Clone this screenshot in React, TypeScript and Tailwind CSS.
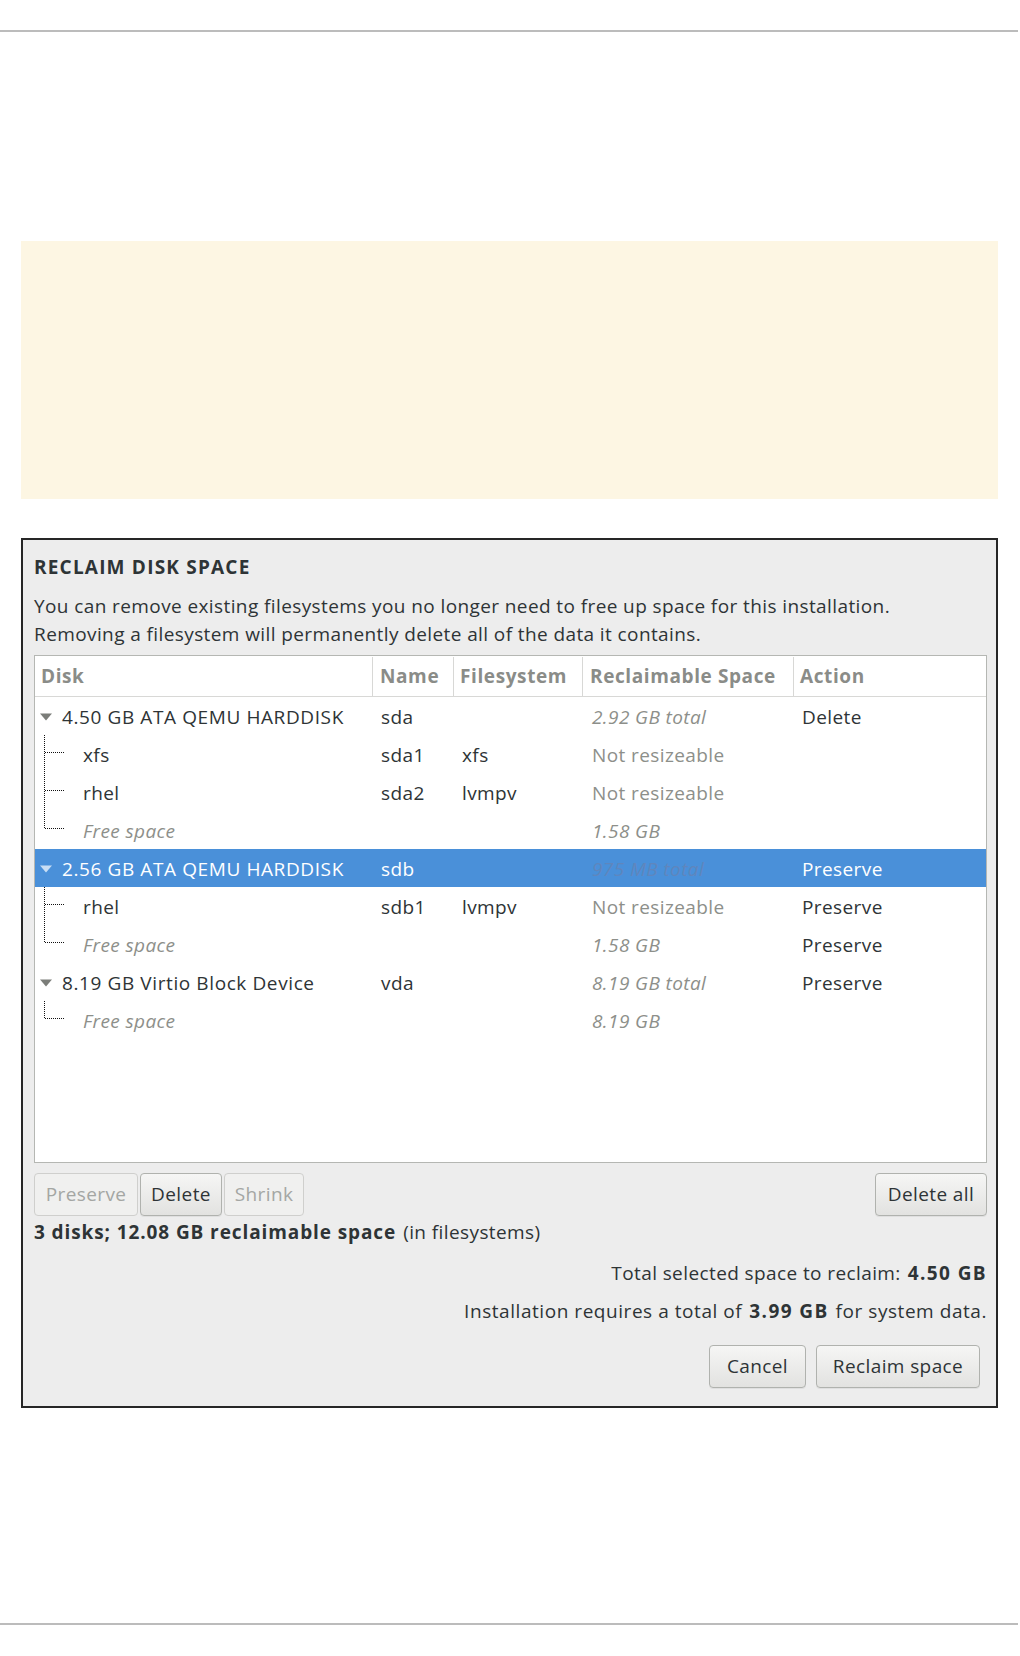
import React from "react";

type Row = {
  kind: "disk" | "child";
  last?: boolean;
  free?: boolean;
  selected?: boolean;
  name: string;
  dev?: string;
  fs?: string;
  rec: string;
  recItalic?: boolean;
  action?: string;
};

const rows: Row[] = [
  { kind: "disk", name: "4.50 GB ATA QEMU HARDDISK", dev: "sda", rec: "2.92 GB total", recItalic: true, action: "Delete" },
  { kind: "child", name: "xfs", dev: "sda1", fs: "xfs", rec: "Not resizeable" },
  { kind: "child", name: "rhel", dev: "sda2", fs: "lvmpv", rec: "Not resizeable" },
  { kind: "child", last: true, free: true, name: "Free space", rec: "1.58 GB", recItalic: true },
  { kind: "disk", selected: true, name: "2.56 GB ATA QEMU HARDDISK", dev: "sdb", rec: "975 MB total", recItalic: true, action: "Preserve" },
  { kind: "child", name: "rhel", dev: "sdb1", fs: "lvmpv", rec: "Not resizeable", action: "Preserve" },
  { kind: "child", last: true, free: true, name: "Free space", rec: "1.58 GB", recItalic: true, action: "Preserve" },
  { kind: "disk", name: "8.19 GB Virtio Block Device", dev: "vda", rec: "8.19 GB total", recItalic: true, action: "Preserve" },
  { kind: "child", last: true, free: true, name: "Free space", rec: "8.19 GB", recItalic: true },
];

function Triangle({ selected }: { selected?: boolean }) {
  return (
    <svg width="14" height="10" viewBox="0 0 14 10" className="shrink-0">
      <polygon points="1,1.5 13,1.5 7,8.5" fill={selected ? "#c9def4" : "#7b7d79"} />
    </svg>
  );
}

function TreeLine({ last }: { last?: boolean }) {
  return (
    <svg width="21" height="38" viewBox="0 0 21 38" className="shrink-0" shapeRendering="crispEdges">
      <line x1="0.5" y1="0" x2="0.5" y2={last ? 18 : 38} stroke="#111111" strokeWidth="1" strokeDasharray="1 1" />
      <line x1="1" y1="17.5" x2="21" y2="17.5" stroke="#111111" strokeWidth="1" strokeDasharray="1 1" />
    </svg>
  );
}

function TableRow({ r }: { r: Row }) {
  const sel = !!r.selected;
  const base = sel ? "bg-[#4a90d9] text-white" : "text-[#2e3436]";
  const gray = sel ? "text-[#5f86bd]" : "text-[#8d8f8a]";
  return (
    <div className={`flex h-[38px] items-center pt-[2px] ${base}`}>
      <div className="flex w-[338px] shrink-0 items-center">
        {r.kind === "disk" ? (
          <>
            <span className="ml-[4px]"><Triangle selected={sel} /></span>
            <span className="ml-[9px] whitespace-nowrap tracking-[0.6px]">{r.name}</span>
          </>
        ) : (
          <>
            <span className="ml-[9px] -mt-[2px] flex h-[38px] items-start"><TreeLine last={r.last} /></span>
            <span className={`ml-[18px] whitespace-nowrap ${r.free ? `italic ${gray}` : ""}`}>{r.name}</span>
          </>
        )}
      </div>
      <div className="w-[81px] shrink-0 pl-[8px]">{r.dev ?? ""}</div>
      <div className="w-[129px] shrink-0 pl-[8px]">{r.fs ?? ""}</div>
      <div className={`w-[211px] shrink-0 pl-[9px] ${gray} ${r.recItalic ? "italic" : ""}`}>{r.rec}</div>
      <div className="flex-1 pl-[8px]">{r.action ?? ""}</div>
    </div>
  );
}

function Btn({
  children,
  disabled,
  className = "",
}: {
  children: React.ReactNode;
  disabled?: boolean;
  className?: string;
}) {
  return (
    <div
      className={`flex items-center justify-center rounded-[4px] border ${
        disabled
          ? "border-[#cfcfcd] bg-[#f0f0ef] text-[#a4a6a3]"
          : "border-[#b0b2ae] bg-gradient-to-b from-[#f6f6f5] to-[#e2e2e0] text-[#2e3436] shadow-[0_1px_0_rgba(0,0,0,0.06)]"
      } ${className}`}
    >
      {children}
    </div>
  );
}

export default function App() {
  return (
    <div className="relative h-[1656px] w-[1020px] overflow-hidden bg-white font-['Open_Sans',sans-serif] text-[19px] tracking-[0.4px] text-[#2e3436]">
      <div className="pt-[30px]">
        <div className="h-[2px] w-[1018px] bg-[#bcbcbc]" />
      </div>

      <div className="ml-[21px] mt-[209px] h-[258px] w-[977px] bg-[#fdf6e3]" />

      <div className="ml-[21px] mt-[39px] flex h-[870px] w-[977px] flex-col border-2 border-[#262626] bg-[#ededed] pl-[11px] pr-[9px] pt-[14px]">
        <div className="h-[26px] font-bold leading-[26px] tracking-[1.2px]">RECLAIM DISK SPACE</div>
        <div className="mt-[12px] leading-[28px]">
          <div>You can remove existing filesystems you no longer need to free up space for this installation.</div>
          <div>Removing a filesystem will permanently delete all of the data it contains.</div>
        </div>

        <div className="mt-[7px] flex h-[508px] flex-col border border-[#b5b7b3] bg-white">
          <div className="flex h-[41px] shrink-0 items-center border-b border-[#d8d8d6] pt-[1px] font-bold tracking-[0.6px] text-[#8a8c88]">
            <div className="flex h-full w-[338px] shrink-0 items-center border-r border-[#d8d8d6] pl-[6px]">Disk</div>
            <div className="flex h-full w-[81px] shrink-0 items-center border-r border-[#d8d8d6] pl-[7px]">Name</div>
            <div className="flex h-full w-[129px] shrink-0 items-center border-r border-[#d8d8d6] pl-[6px]">Filesystem</div>
            <div className="flex h-full w-[211px] shrink-0 items-center border-r border-[#d8d8d6] pl-[7px]">Reclaimable Space</div>
            <div className="flex h-full flex-1 items-center pl-[6px]">Action</div>
          </div>
          {rows.map((r, i) => (
            <TableRow key={i} r={r} />
          ))}
        </div>

        <div className="mt-[10px] flex h-[43px] items-stretch">
          <Btn disabled className="w-[104px]">Preserve</Btn>
          <Btn className="ml-[2px] w-[82px]">Delete</Btn>
          <Btn disabled className="ml-[2px] w-[80px]">Shrink</Btn>
          <div className="flex-1" />
          <Btn className="w-[112px]">Delete all</Btn>
        </div>

        <div className="flex h-[32px] items-center">
          <span className="font-bold tracking-[0.9px]">3 disks; 12.08 GB reclaimable space</span>
          <span className="ml-[7px]">(in filesystems)</span>
        </div>

        <div className="mt-[6px] flex h-[38px] items-center justify-end">
          <span>Total selected space to reclaim:</span>
          <span className="ml-[7px] font-bold tracking-[1.4px]">4.50 GB</span>
        </div>
        <div className="flex h-[38px] items-center justify-end">
          <span className="tracking-[0.55px]">Installation requires a total of</span>
          <span className="mx-[7px] font-bold tracking-[1.4px]">3.99 GB</span>
          <span className="tracking-[0.55px]">for system data.</span>
        </div>

        <div className="mt-[15px] flex h-[43px] justify-end pr-[7px]">
          <Btn className="w-[97px]">Cancel</Btn>
          <Btn className="ml-[10px] w-[164px]">Reclaim space</Btn>
        </div>
      </div>

      <div className="absolute left-0 top-[1623px] h-[2px] w-[1018px] bg-[#bcbcbc]" />
    </div>
  );
}
